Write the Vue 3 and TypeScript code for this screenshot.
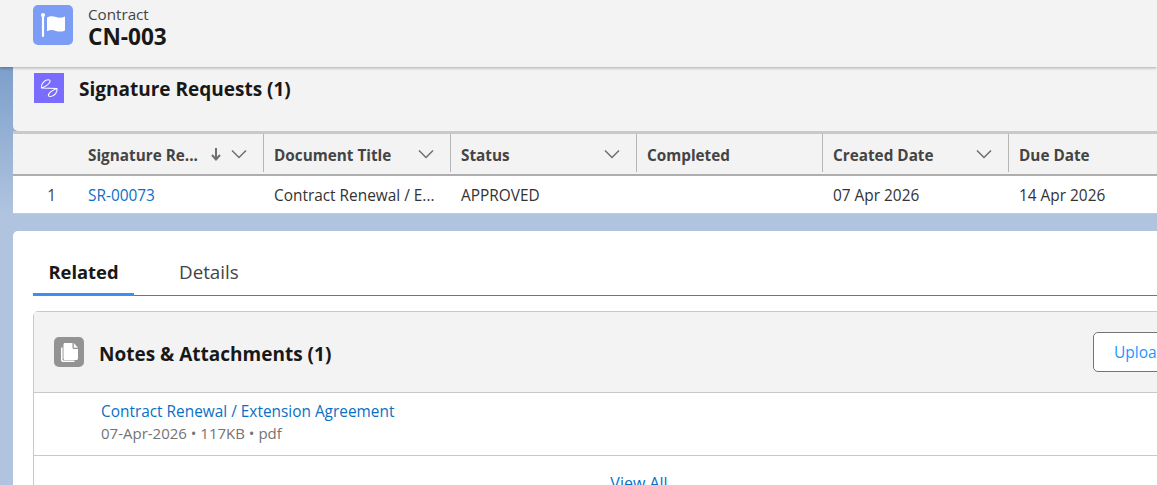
<script setup lang="ts">
interface Col { label: string; sort?: boolean; menu: boolean; value: string; link?: boolean }
const cols: Col[] = [
  { label: 'Signature Re...', sort: true, menu: true, value: 'SR-00073', link: true },
  { label: 'Document Title', menu: true, value: 'Contract Renewal / E...' },
  { label: 'Status', menu: true, value: 'APPROVED' },
  { label: 'Completed', menu: false, value: '' },
  { label: 'Created Date', menu: true, value: '07 Apr 2026' },
  { label: 'Due Date', menu: false, value: '14 Apr 2026' },
]
</script>

<template>
  <div class="page">
    <header class="top">
      <div class="flag-icon">
        <svg viewBox="0 0 40 40" width="40" height="40">
          <circle cx="10" cy="10" r="2.100" fill="#fff" />
          <rect x="8.900" y="10" width="2.200" height="22" rx="1.100" fill="#fff" />
          <path d="M14 12.500c3.200-1.800 6-1.500 9-.5 3 1 6 1 9-.6v14c-3 1.400-6 1.500-9 .5-3-1-5.800-1.200-9 .4z" fill="#fff" />
        </svg>
      </div>
      <div class="top-text">
        <div class="obj">Contract</div>
        <div class="rec">CN-003</div>
      </div>
    </header>

    <section class="sig">
      <div class="sig-head">
        <div class="sig-icon">
          <svg viewBox="0 0 30 30" width="30" height="30" fill="none" stroke="#fff" stroke-width="1.100" stroke-linecap="round" stroke-linejoin="round">
            <path d="M7.500 15C6.500 11.500 10.500 6.800 14 6.800c4.500 0 1.500 5-6.500 8.200l15.500.5c1 3.500-3 8-6.500 8-4.500 0-1.500-5 6.500-8" />
          </svg>
        </div>
        <h2>Signature Requests (1)</h2>
      </div>
    </section>

    <div class="table">
      <div class="cell-num head"></div>
      <div v-for="c in cols" :key="c.label" class="th">
        <span class="th-label">{{ c.label }}</span>
        <svg v-if="c.sort" class="arrow" viewBox="0 0 12 14" width="12" height="14" fill="none" stroke="#706e6b" stroke-width="2">
          <path d="M6 1v11.500M2 8l4 4.500L10 8" />
        </svg>
        <svg v-if="c.menu" class="chev" viewBox="0 0 16 10" width="16" height="10" fill="none" stroke="#706e6b" stroke-width="1.500">
          <path d="M1 1.500 8 8.500l7-7" />
        </svg>
      </div>
      <div class="cell-num">1</div>
      <div v-for="c in cols" :key="'v' + c.label" class="td" :class="{ link: c.link }">{{ c.value }}</div>
    </div>

    <main class="main">
      <nav class="tabs">
        <span class="tab active">Related</span>
        <span class="tab">Details</span>
      </nav>
      <section class="notes">
        <div class="notes-head">
          <div class="notes-icon">
            <svg viewBox="0 0 30 30" width="30" height="30">
              <path d="M7 10.500h1.600v12.200c0 .4.300.7.700.7h11.200V25H9c-1.100 0-2-.9-2-2z" fill="#fff" />
              <path d="M11 6h7.500v4.500c0 .8.700 1.500 1.500 1.500h4v9.500c0 .8-.7 1.500-1.500 1.500H11c-.8 0-1.500-.7-1.500-1.500v-14C9.500 6.700 10.200 6 11 6zM19.800 6l4.200 4.700h-4.200z" fill="#fff" />
            </svg>
          </div>
          <h3>Notes &amp; Attachments (1)</h3>
          <button class="upload">Upload Files</button>
        </div>
        <div class="file">
          <a class="file-name">Contract Renewal / Extension Agreement</a>
          <div class="file-meta">07-Apr-2026 • 117KB • pdf</div>
        </div>
        <div class="view-all">View All</div>
      </section>
    </main>
  </div>
</template>

<style>
html, body { margin: 0; overflow: hidden; }
</style>

<style scoped>
.page {
  width: 1157px;
  height: 485px;
  overflow: hidden;
  background: linear-gradient(180deg, #7d9fca 67px, #b0c4df 215px);
  font-family: "Open Sans", "Noto Sans", sans-serif;
  font-size: 15.4px;
  color: #181818;
  position: relative;
}
.top {
  height: 67px;
  box-sizing: border-box;
  background: #f3f3f3;
  display: flex;
  align-items: flex-start;
  padding: 5px 0 0 33px;
  box-shadow: 0 1px 3px rgba(0, 0, 0, .3);
  position: relative;
  z-index: 2;
}
.flag-icon {
  width: 40px;
  height: 40px;
  border-radius: 5px;
  background: #7b9df5;
}
.flag-icon svg { display: block; }
.top-text { margin: -1px 0 0 15px; }
.obj { font-size: 15.200px; line-height: 20px; color: #444; }
.rec { font-size: 22.600px; line-height: 24px; font-weight: 700; margin-top: 1px; }
.sig {
  margin-left: 13px;
  height: 64px;
  box-sizing: border-box;
  background: #f3f3f3;
  border-radius: 0 0 0 5px;
  padding: 6px 0 0 21px;
}
.sig-head { display: flex; align-items: flex-start; }
.sig-icon { width: 30px; height: 30px; background: #7a6cff; }
.sig-icon svg { display: block; }
.sig h2 { margin: 1px 0 0 15px; font-size: 19px; line-height: 30px; font-weight: 700; }
.table {
  margin-left: 13px;
  border-top: 3px solid #c9c9c9;
  display: grid;
  grid-template-columns: 65px 186px 187px 186px 186px 186px 200px;
  grid-template-rows: 42px 37px;
  border-bottom: 1px solid #c9c9c9;
  width: 1144px;
  overflow: hidden;
}
.head, .th { background: #f3f3f3; border-bottom: 2px solid #aeaeae; box-sizing: border-box; }
.th {
  display: flex;
  align-items: center;
  padding: 0 0 0 10px;
  font-weight: 700;
  font-size: 15.300px;
  color: #444;
  position: relative;
}
.th::after {
  content: "";
  position: absolute;
  right: 0;
  top: 0;
  bottom: 2px;
  width: 1px;
  background: #b5b5b5;
}
.th:last-of-type::after { display: none; }
.th-label { flex: 1; white-space: nowrap; padding-top: 2px; }
.arrow { margin-right: 9px; }
.chev { margin-right: 17px; }
.cell-num {
  background: #fff;
  display: flex;
  align-items: center;
  justify-content: flex-end;
  padding: 2px 22px 0 0;
  box-sizing: border-box;
  color: #444;
}
.cell-num.head { background: #f3f3f3; }
.td {
  background: #fff;
  display: flex;
  align-items: center;
  padding: 2px 0 0 10px;
  box-sizing: border-box;
  color: #333;
  white-space: nowrap;
}
.td.link { color: #0b6fc4; }
.main {
  margin: 17px 0 0 13px;
  height: 300px;
  background: #fff;
  border-radius: 5px 0 0 0;
  padding: 21px 0 0 20px;
  box-sizing: border-box;
  width: 1300px;
}
.tabs {
  display: flex;
  width: 1124px;
  height: 44px;
  box-sizing: border-box;
  border-bottom: 1px solid #747474;
}
.tab {
  font-size: 18.800px;
  line-height: 40px;
  color: #444;
  height: 44px;
  box-sizing: border-box;
  white-space: nowrap;
}
.tab.active {
  font-size: 18.400px;
  font-weight: 700;
  color: #181818;
  border-bottom: 3px solid #3c8ff0;
  width: 101px;
  text-align: center;
}
.tab + .tab { padding-left: 45px; }
.notes {
  margin-top: 15px;
  width: 1212px;
  box-sizing: border-box;
  border: 1px solid #c9c9c9;
  border-radius: 5px 5px 0 0;
}
.notes-head {
  height: 81px;
  box-sizing: border-box;
  background: #f3f3f3;
  border-bottom: 1px solid #c9c9c9;
  display: flex;
  align-items: center;
  padding-left: 20px;
  position: relative;
}
.notes-icon { width: 30px; height: 30px; background: #939393; border-radius: 5px; }
.notes-icon svg { display: block; }
.notes h3 { margin: 0 0 0 15px; font-size: 19px; font-weight: 700; padding-top: 4px; }
.upload {
  position: absolute;
  left: 1059px;
  top: 20px;
  width: 130px;
  height: 40px;
  background: #fff;
  border: 1px solid #747474;
  border-radius: 5px;
  color: #1b96ff;
  font: inherit;
  font-size: 15.500px;
  text-align: left;
  padding-left: 20px;
}
.file {
  height: 63px;
  box-sizing: border-box;
  border-bottom: 1px solid #c9c9c9;
  padding: 8px 0 0 67px;
}
.file-name { color: #0b6fc4; line-height: 21px; display: block; }
.file-meta { color: #747474; font-size: 15px; line-height: 21px; margin-top: 1px; }
.view-all { text-align: center; color: #0b6fc4; font-size: 16px; margin-top: 16px; }
</style>
